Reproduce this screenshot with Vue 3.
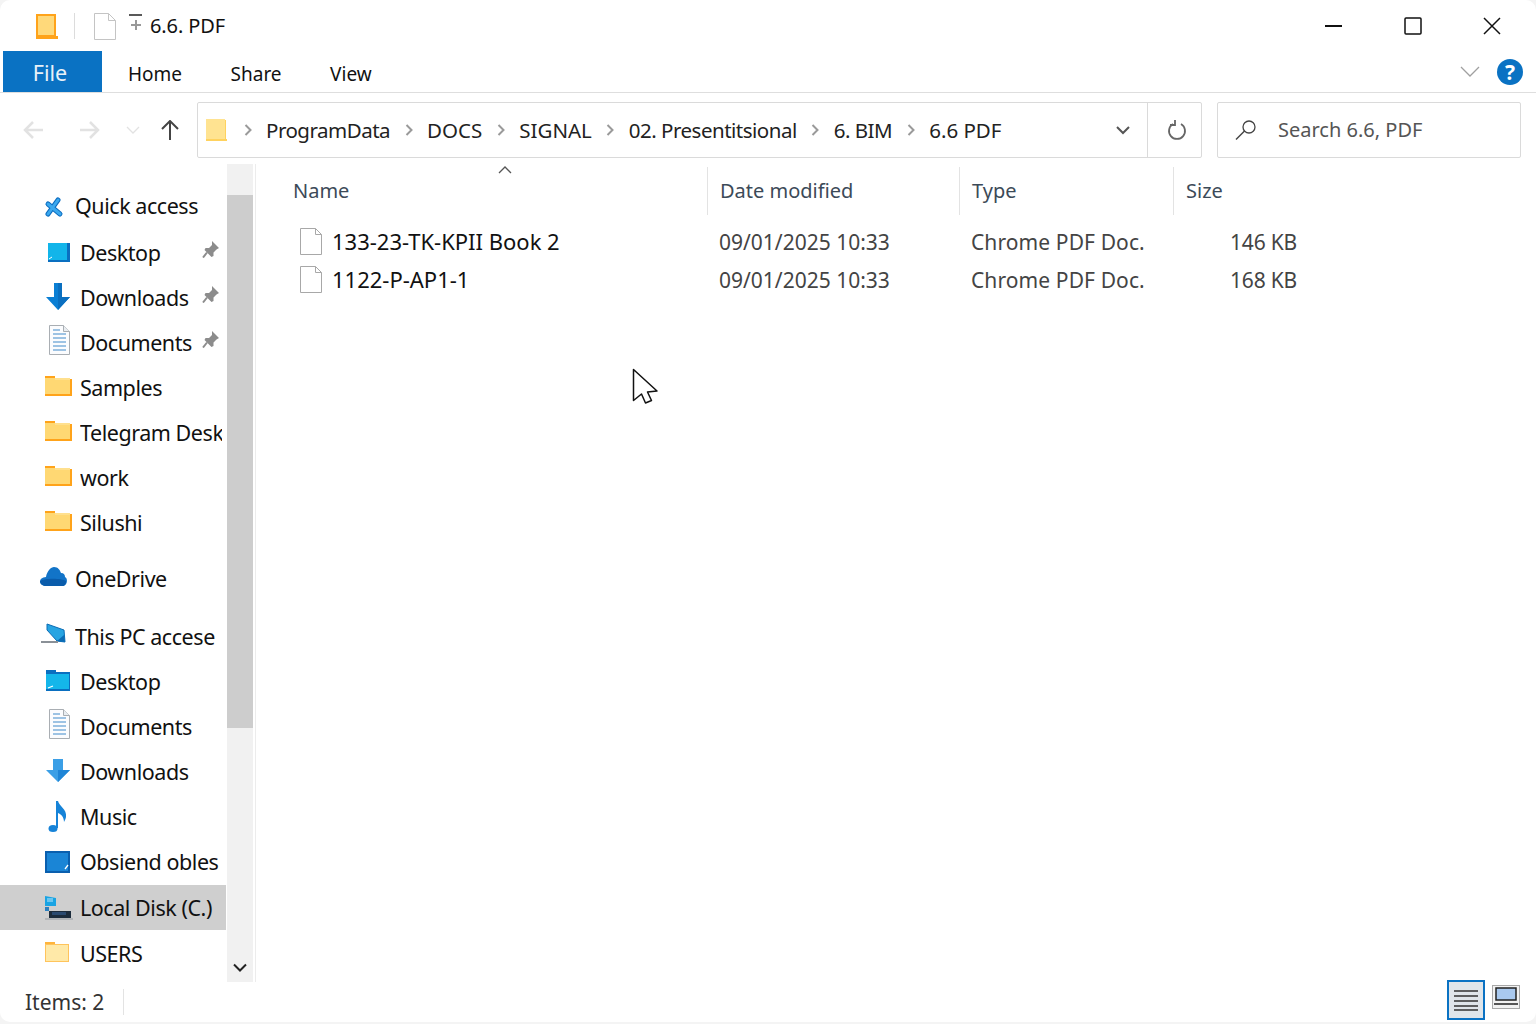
<template>
  <div class="window">
    <svg class="defs" width="0" height="0">
      <defs>
        <symbol id="folder" viewBox="0 0 30 30" overflow="visible">
          <rect x="1" y="3" width="10" height="3" fill="#ffa31a" />
          <rect x="1" y="5" width="25" height="17" fill="#ffd873" />
          <path d="M11 5h15v2H11z" fill="#ffe08e" />
          <path d="M26 6h2v15h-2zM1 21h27v2H1z" fill="#ffa31a" />
        </symbol>
        <symbol id="folder-pale" viewBox="0 0 30 30" overflow="visible">
          <rect x="1" y="3" width="10" height="3" fill="#ffb43c" />
          <rect x="1.500" y="5.500" width="23" height="17" fill="#ffe9a8" stroke="#ffc45c" />
        </symbol>
        <symbol id="desktop" viewBox="0 0 30 30" overflow="visible">
          <rect x="4" y="5" width="22" height="19" fill="#0a6fc0" />
          <rect x="4" y="5" width="19" height="17" fill="#12b5ea" />
          <path d="M5 21l3-2" stroke="#fff" stroke-width="1" />
        </symbol>
        <symbol id="desktop-tab" viewBox="0 0 30 30" overflow="visible">
          <rect x="2" y="3" width="10" height="3" fill="#0a6fc0" />
          <rect x="2" y="5" width="24" height="19" fill="#0a6fc0" />
          <rect x="2" y="7" width="23" height="15" fill="#14b6ea" />
          <path d="M4 21l5-2" stroke="#fff" stroke-width="1.200" />
        </symbol>
        <symbol id="download" viewBox="0 0 30 30" overflow="visible">
          <path d="M10 0h8v14h8L14 27 2 14h8z" fill="#0b7fd4" />
          <path d="M14 0h4v14h8L14 27z" fill="#0a6fc0" />
        </symbol>
        <symbol id="download-light" viewBox="0 0 30 30" overflow="visible">
          <path d="M9 2h10v11h7L14 25 2 13h7z" fill="#3b9fe6" />
          <path d="M14 13h12L14 25z" fill="#1f85d6" />
        </symbol>
        <symbol id="document" viewBox="0 0 30 30" overflow="visible">
          <path d="M5.500-2.500h14l6 6v23h-20z" fill="#fbfcfe" stroke="#a9aeb3" />
          <path d="M19.500-2.500v6h6" fill="#e9edf1" stroke="#a9aeb3" />
          <path d="M9 2h7M9 6h13M9 10h13M9 14h13M9 18h13M9 22h13" stroke="#7fb0dc" stroke-width="1.400" />
        </symbol>
        <symbol id="music" viewBox="0 0 30 30" overflow="visible">
          <ellipse cx="9" cy="26.500" rx="4.500" ry="3.500" fill="#1683d8" />
          <path d="M12 26V-1h2c1 5 9 8 8 16-.3 2-1 3-2 5 0-5-3-8-6-9v15z" fill="#1683d8" />
        </symbol>
        <symbol id="obsidian" viewBox="0 0 30 30" overflow="visible">
          <rect x="1" y="4" width="25" height="22" fill="#0a5fae" />
          <rect x="3" y="6" width="21" height="18" fill="#1a85d6" />
          <path d="M21 22l3-4" stroke="#fff" stroke-width="1.300" />
        </symbol>
        <symbol id="disk" viewBox="0 0 30 30" overflow="visible">
          <path d="M1 3l11 2v8H1z" fill="#19a4e4" />
          <path d="M3 6h6M3 8h6" stroke="#bfe8fa" />
          <rect x="1" y="14" width="4" height="4" fill="#2b80c0" />
          <rect x="5" y="18" width="22" height="7" fill="#1c2c3c" />
          <rect x="8" y="19" width="14" height="3" fill="#2a4a70" />
          <path d="M1 26h28" stroke="#a8acb0" stroke-width="1.500" />
        </symbol>
        <symbol id="star" viewBox="0 0 30 30" overflow="visible">
          <path d="M8 13l12 10M18 9L8 23" stroke="#0b6cc0" stroke-width="5" stroke-linecap="round" />
          <path d="M8 13l12 10M18 9L8 23" stroke="#3aa8ee" stroke-width="3" stroke-linecap="round" />
        </symbol>
        <symbol id="cloud" viewBox="0 0 30 30" overflow="visible">
          <path d="M6 22C-2 22-2 13 6 13 7 7 11 3 14 3c4 0 6 3 7 6 3 0 4 2 4 4 3 1 3 9-3 9z" fill="#1274c8" />
          <path d="M0 17c5-3 21-3 26 0 0 3-1 5-4 5H6c-3 0-6-2-6-5z" fill="#0a5cab" />
        </symbol>
        <symbol id="pc" viewBox="0 0 30 30" overflow="visible">
          <path d="M7 2l17 6 1 12-8-1L7 8z" fill="#27a4e2" stroke="#0b6cb5" />
          <path d="M17 19l8 1-1-7z" fill="#0b6cb5" />
          <path d="M1 20h17" stroke="#8a9097" stroke-width="2" />
        </symbol>
      </defs>
    </svg>

    <header class="titlebar">
      <svg class="title-folder" width="22" height="25" viewBox="0 0 22 25">
        <rect x="0.500" y="0.500" width="18" height="22" fill="#ffd97a" />
        <path d="M0 0h18v2H2v19h16V0h2v22h2v3H0z" fill="#ffa31a" />
      </svg>
      <span class="title-sep"></span>
      <svg width="22" height="27" viewBox="0 0 22 27">
        <path d="M.5.500h14l7 7v19H.5z" fill="#fff" stroke="#c4c4c4" />
        <path d="M14.500.500v7h7" fill="none" stroke="#c4c4c4" />
      </svg>
      <svg class="title-qat" width="14" height="18" viewBox="0 0 14 18">
        <path d="M0 1h13" stroke="#222" stroke-width="1.500" />
        <path d="M7 6v10M2 11h10" stroke="#999" stroke-width="2" />
      </svg>
      <span class="title-text">6.6. PDF</span>
      <div class="win-controls">
        <svg width="18" height="18" viewBox="0 0 18 18"><path d="M0 9h17" stroke="#111" stroke-width="2" /></svg>
        <svg width="18" height="18" viewBox="0 0 18 18"><rect x="1" y="1" width="16" height="16" rx="1" fill="none" stroke="#111" stroke-width="1.500" /></svg>
        <svg width="18" height="18" viewBox="0 0 18 18"><path d="M1 1l16 16M17 1L1 17" stroke="#111" stroke-width="1.500" /></svg>
      </div>
    </header>

    <div class="ribbon">
      <div class="tab-file">File</div>
      <div class="tab" v-for="tab in tabs" :key="tab">{{ tab }}</div>
      <svg class="ribbon-collapse" width="20" height="12" viewBox="0 0 20 12">
        <path d="M1 1l9 9 9-9" fill="none" stroke="#a0a0a0" stroke-width="1.300" />
      </svg>
      <div class="help">?</div>
    </div>

    <div class="navbar">
      <div class="nav-arrows">
        <svg width="22" height="20" viewBox="0 0 22 20"><path d="M21 10H3M11 2l-8 8 8 8" fill="none" stroke="#e2e2e2" stroke-width="2.500" /></svg>
        <svg width="22" height="20" viewBox="0 0 22 20"><path d="M1 10h18M11 2l8 8-8 8" fill="none" stroke="#e2e2e2" stroke-width="2.500" /></svg>
        <svg width="14" height="9" viewBox="0 0 14 9"><path d="M1 1l6 6 6-6" fill="none" stroke="#e2e2e2" stroke-width="1.300" /></svg>
        <svg width="18" height="20" viewBox="0 0 18 20"><path d="M9 20V2M1 9l8-8 8 8" fill="none" stroke="#444" stroke-width="2" /></svg>
      </div>
      <div class="address">
        <svg class="addr-folder" width="21" height="22" viewBox="0 0 21 22">
          <rect x="0" y="0" width="19" height="20" fill="#ffe391" />
          <path d="M19 1h1v19h1v2H0v-2h19z" fill="#ffd25e" />
        </svg>
        <template v-for="crumb in crumbs" :key="crumb.label">
          <svg class="crumb-chevron" width="8" height="12" viewBox="0 0 8 12"><path d="M1.500 1l5 5-5 5" fill="none" stroke="#9a9a9a" stroke-width="2" /></svg>
          <span class="crumb" :class="{ 'crumb-caps': crumb.caps }">{{ crumb.label }}</span>
        </template>
        <svg class="addr-dropdown" width="14" height="9" viewBox="0 0 14 9"><path d="M1 1l6 6 6-6" fill="none" stroke="#555" stroke-width="2" /></svg>
        <div class="addr-refresh">
          <svg width="20" height="22" viewBox="0 0 20 22">
            <path d="M6 5a8 8 0 1 0 8 0M8 1v5H3" fill="none" stroke="#666" stroke-width="1.800" />
          </svg>
        </div>
      </div>
      <div class="search">
        <svg width="22" height="22" viewBox="0 0 22 22">
          <circle cx="14" cy="8" r="6" fill="none" stroke="#444" stroke-width="1.300" />
          <path d="M9.500 12L1 20.500" stroke="#444" stroke-width="1.500" />
        </svg>
        <span class="search-text">Search 6.6, PDF</span>
      </div>
    </div>

    <div class="main">
      <aside class="sidebar">
        <div class="side-list">
          <div
            v-for="item in navItems"
            :key="item.id"
            class="side-row"
            :class="[item.extra, { head: item.head, selected: item.selected }]"
          >
            <svg class="side-icon"><use :href="'#' + item.icon" /></svg>
            <span class="side-label">{{ item.label }}</span>
            <svg v-if="item.pinned" class="side-pin" width="17" height="17" viewBox="0 0 17 17">
              <path d="M10 0l7 7-2.500 1.500-3 3V15l-2 1-7-7 1-2h3.500l3-3z" fill="#8c8c8c" />
              <path d="M5 11.500L1 16.500" stroke="#8c8c8c" stroke-width="2" />
            </svg>
          </div>
        </div>
        <div class="scrollbar">
          <div class="scroll-thumb"></div>
          <svg class="scroll-down" width="14" height="10" viewBox="0 0 14 10"><path d="M1 1.500l6 6 6-6" fill="none" stroke="#222" stroke-width="2" /></svg>
        </div>
      </aside>

      <section class="files">
        <svg class="sort-caret" width="14" height="8" viewBox="0 0 14 8"><path d="M1 7l6-6 6 6" fill="none" stroke="#555" stroke-width="1.300" /></svg>
        <div class="file-head">
          <div class="col col-name">Name</div>
          <div class="col col-date">Date modified</div>
          <div class="col col-type">Type</div>
          <div class="col col-size">Size</div>
        </div>
        <div v-for="file in files" :key="file.name" class="file-row">
          <div class="cell-name">
            <svg width="24" height="27" viewBox="0 0 24 27">
              <path d="M1.500.500h15l6 6v20h-21z" fill="#fff" stroke="#a8a8a8" />
              <path d="M16.500.500v6h6" fill="none" stroke="#a8a8a8" />
            </svg>
            <span>{{ file.name }}</span>
          </div>
          <div class="cell-date">{{ file.date }}</div>
          <div class="cell-type">{{ file.type }}</div>
          <div class="cell-size">{{ file.size }}</div>
        </div>
        <svg class="cursor" width="26" height="38" viewBox="0 0 26 38">
          <path d="M1.500 1.500v31l8-6.500 4 9 6-2.500-4-8.500 9.500-1z" fill="#fff" stroke="#111" stroke-width="1.500" stroke-linejoin="round" />
        </svg>
      </section>
    </div>

    <footer class="statusbar">
      <span class="status-items">Items: 2</span>
      <span class="status-sep"></span>
      <div class="view-btn view-active">
        <svg width="26" height="24" viewBox="0 0 26 24">
          <path d="M1 3h24M1 8h24M1 13h24M1 18h24M1 22h24" stroke="#333" stroke-width="1.500" />
        </svg>
      </div>
      <div class="view-btn view-large">
        <svg width="28" height="24" viewBox="0 0 28 24">
          <rect x="0.500" y="0.500" width="27" height="23" fill="#f2f2f2" stroke="#a8a8a8" />
          <rect x="4" y="3" width="20" height="12" fill="#a9c9ef" stroke="#222" stroke-width="1.500" />
          <path d="M2 19h24" stroke="#222" stroke-width="1.500" />
        </svg>
      </div>
    </footer>
  </div>
</template>

<script setup>
const tabs = ['Home', 'Share', 'View']

const crumbs = [
  { label: 'ProgramData' },
  { label: 'DOCS', caps: true },
  { label: 'SIGNAL', caps: true },
  { label: '02. Presentitsional' },
  { label: '6. BIM' },
  { label: '6.6 PDF', caps: true },
]

const navItems = [
  { id: 1, label: 'Quick access', icon: 'star', head: true, extra: 'after-quick' },
  { id: 2, label: 'Desktop', icon: 'desktop', pinned: true },
  { id: 3, label: 'Downloads', icon: 'download', pinned: true },
  { id: 4, label: 'Documents', icon: 'document', pinned: true },
  { id: 5, label: 'Samples', icon: 'folder' },
  { id: 6, label: 'Telegram Desk', icon: 'folder' },
  { id: 7, label: 'work', icon: 'folder' },
  { id: 8, label: 'Silushi', icon: 'folder' },
  { id: 9, label: 'OneDrive', icon: 'cloud', head: true, extra: 'group-one' },
  { id: 10, label: 'This PC accese', icon: 'pc', head: true, extra: 'group-pc' },
  { id: 11, label: 'Desktop', icon: 'desktop-tab' },
  { id: 12, label: 'Documents', icon: 'document' },
  { id: 13, label: 'Downloads', icon: 'download-light' },
  { id: 14, label: 'Music', icon: 'music' },
  { id: 15, label: 'Obsiend obles', icon: 'obsidian' },
  { id: 16, label: 'Local Disk (C.)', icon: 'disk', selected: true },
  { id: 17, label: 'USERS', icon: 'folder-pale', extra: 'after-selected' },
]

const files = [
  { name: '133-23-TK-KPII Book 2', date: '09/01/2025 10:33', type: 'Chrome PDF Doc.', size: '146 KB' },
  { name: '1122-P-AP1-1', date: '09/01/2025 10:33', type: 'Chrome PDF Doc.', size: '168 KB' },
]
</script>

<style>
html,
body {
  background: #f4f4f4;
}
</style>

<style scoped>
.window {
  width: 1536px;
  height: 1022px;
  display: flex;
  flex-direction: column;
  overflow: hidden;
  background: #fff;
  border-radius: 10px;
  color: #111;
  font-family: "Noto Sans", "Open Sans", sans-serif;
  font-size: 21.500px;
}

.defs {
  position: absolute;
}

.titlebar {
  height: 51px;
  flex: none;
  display: flex;
  align-items: center;
  padding: 1px 0 0 36px;
  box-sizing: border-box;
}

.title-sep {
  width: 1px;
  height: 26px;
  margin: 0 19px 0 16px;
  background: #dcdcdc;
}

.title-qat {
  margin: -6px 7px 0 13px;
}

.title-text {
  font-size: 20px;
  letter-spacing: -0.1px;
  padding-bottom: 2px;
}

.win-controls {
  margin-left: auto;
  display: flex;
  gap: 61px;
  padding-right: 35px;
}

.ribbon {
  height: 42px;
  flex: none;
  display: flex;
  align-items: center;
  padding: 0 13px 0 3px;
  border-bottom: 1px solid #dedede;
  box-sizing: border-box;
}

.tab-file {
  width: 99px;
  height: 41px;
  padding-right: 5px;
  box-sizing: border-box;
  line-height: 44px;
  text-align: center;
  background: #0a72c3;
  color: #e8f1f8;
  margin-right: 26px;
}

.tab {
  font-size: 19px;
  margin-right: 48.500px;
  padding-top: 4px;
}

.ribbon-collapse {
  margin-left: auto;
  margin-right: 17px;
}

.help {
  width: 26px;
  height: 26px;
  border-radius: 50%;
  background: #0a72c3;
  color: #fff;
  font-size: 21px;
  font-weight: 700;
  line-height: 26px;
  text-align: center;
}

.navbar {
  height: 71px;
  flex: none;
  display: flex;
  padding: 9px 15px 6px 0;
  box-sizing: border-box;
  color: #222;
}

.nav-arrows {
  width: 197px;
  display: flex;
  align-items: center;
  padding-left: 22px;
  gap: 35px;
  box-sizing: border-box;
}

.nav-arrows svg:nth-child(3) {
  margin-left: -10px;
}

.nav-arrows svg:nth-child(4) {
  margin-left: -14px;
}

.address {
  width: 1005px;
  display: flex;
  align-items: center;
  gap: 14.500px;
  padding-left: 8px;
  box-sizing: border-box;
  border: 1px solid #dadada;
  border-radius: 2px;
}

.addr-folder {
  margin-right: 2px;
}

.crumb {
  white-space: nowrap;
  font-size: 20.500px;
  letter-spacing: -0.5px;
}

.crumb-caps {
  letter-spacing: 0;
}

.addr-dropdown {
  margin-left: auto;
  margin-right: 4px;
}

.addr-refresh {
  width: 54px;
  height: 100%;
  flex: none;
  display: flex;
  align-items: center;
  justify-content: center;
  margin-left: -1.500px;
  padding-left: 4px;
  border-left: 1px solid #dadada;
  box-sizing: border-box;
}

.search {
  width: 304px;
  margin-left: 15px;
  display: flex;
  align-items: center;
  gap: 21px;
  padding-left: 17px;
  box-sizing: border-box;
  border: 1px solid #dadada;
  border-radius: 2px;
  color: #555;
  font-size: 20px;
}

.search-text {
  padding-bottom: 2px;
}

.main {
  flex: 1;
  min-height: 0;
  display: flex;
}

.sidebar {
  width: 256px;
  flex: none;
  display: flex;
  border-right: 1px solid #ececec;
  box-sizing: border-box;
  overflow: hidden;
}

.side-list {
  width: 226px;
  flex: none;
  padding-top: 19px;
  margin-right: 1px;
  overflow: hidden;
  box-sizing: border-box;
}

.side-row {
  height: 45px;
  display: flex;
  align-items: center;
  gap: 6px;
  padding-left: 44px;
  padding-right: 4px;
  box-sizing: border-box;
  letter-spacing: -0.45px;
}

.side-row.head {
  padding-left: 40px;
  gap: 5px;
}

.side-row.after-quick {
  margin-bottom: 2px;
}

.side-row.group-one {
  margin-top: 11px;
}

.side-row.group-pc {
  margin-top: 13px;
}

.side-row.selected {
  margin-top: 1px;
  background: #cfcfcf;
}

.side-row.after-selected {
  margin-top: 1px;
}

.side-icon {
  width: 30px;
  height: 30px;
  flex: none;
  overflow: visible;
}

.side-label {
  flex: 1;
  min-width: 0;
  white-space: nowrap;
  overflow: hidden;
}

.side-pin {
  flex: none;
  margin-left: 4px;
  margin-right: 3px;
  margin-top: -6px;
}

.scrollbar {
  width: 26px;
  flex: none;
  display: flex;
  flex-direction: column;
  align-items: center;
  padding-top: 31px;
  background: #f1f1f1;
  box-sizing: border-box;
}

.scroll-thumb {
  width: 100%;
  height: 533px;
  background: #cdcdcd;
}

.scroll-down {
  margin-top: auto;
  margin-bottom: 9px;
}

.files {
  position: relative;
  flex: 1;
  min-width: 0;
}

.sort-caret {
  position: absolute;
  left: 242px;
  top: 2px;
}

.file-head {
  height: 48px;
  display: flex;
  align-items: center;
  margin-top: 3px;
  font-size: 20px;
  color: #3c4a58;
}

.col {
  height: 100%;
  display: flex;
  align-items: center;
  box-sizing: border-box;
  padding: 0 0 2px 12px;
  border-right: 1px solid #e3e3e3;
}

.col-name {
  width: 452px;
  padding-left: 37px;
}

.col-date {
  width: 252px;
}

.col-type {
  width: 214px;
}

.col-size {
  border-right: none;
}

.file-row {
  height: 38px;
  display: flex;
  align-items: center;
  font-size: 21px;
}

.file-head + .file-row {
  margin-top: 7px;
}

.cell-name {
  width: 463px;
  display: flex;
  align-items: center;
  gap: 9px;
  padding-left: 43px;
  box-sizing: border-box;
  color: #111;
  font-size: 22px;
}

.cell-date,
.cell-type,
.cell-size {
  color: #444;
  padding-top: 1px;
}

.cell-date {
  width: 252px;
}

.cell-type {
  width: 214px;
  letter-spacing: 0.1px;
}

.cell-size {
  width: 112px;
  text-align: right;
  letter-spacing: -0.2px;
}

.cursor {
  position: absolute;
  left: 376px;
  top: 204px;
}

.statusbar {
  height: 40px;
  flex: none;
  display: flex;
  align-items: center;
  padding: 0 11px 0 25px;
  color: #333;
  font-size: 21px;
}

.status-items {
  width: 98px;
}

.status-sep {
  width: 1px;
  height: 26px;
  background: #e3e3e3;
}

.view-btn {
  width: 38px;
  height: 40px;
  display: flex;
  align-items: center;
  justify-content: center;
}

.view-active {
  margin-left: auto;
  margin-right: 2px;
  margin-top: -4px;
  background: #dfe5ea;
  border: 2px solid #0a72c3;
  box-sizing: border-box;
}

.view-large {
  margin-top: -10px;
}
</style>
